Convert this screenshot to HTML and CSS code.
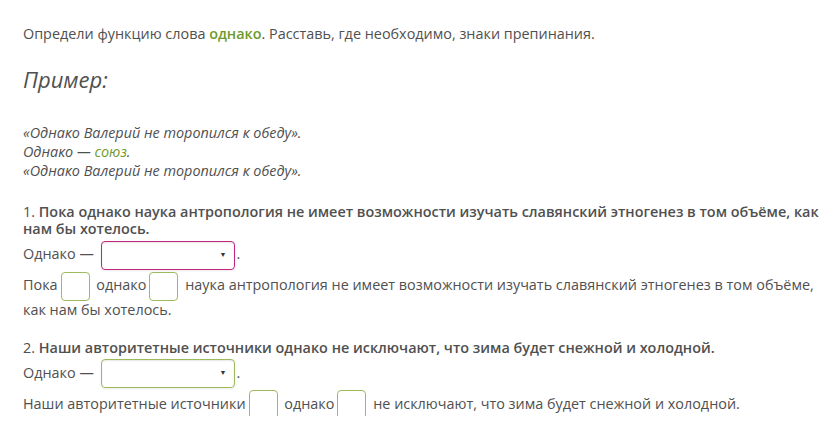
FILE: index.html
```html
<!DOCTYPE html>
<html lang="ru">

<head>
    <meta charset="UTF-8">
    <meta name="viewport" content="width=device-width, initial-scale=1.0">
    <title>Однако</title>
    <link rel="stylesheet" href="styles.css">
</head>

<body>
    <main class="task">
        <p class="intro">Определи функцию слова <b class="accent">однако</b>. Расставь, где необходимо, знаки препинания.</p>

        <h2 class="example-title">Пример:</h2>

        <div class="example">
            «Однако Валерий не торопился к обеду».<br>
            Однако — <span class="accent">союз</span>.<br>
            «Однако Валерий не торопился к обеду».
        </div>

        <section class="question">
            <p class="question-text">1. <b>Пока однако наука антропология не имеет возможности изучать славянский этногенез в том объёме, как нам бы хотелось.</b></p>
            <div class="answer-row">
                Однако —
                <span class="select select-active"><span class="arrow">▼</span></span>.
            </div>
            <p class="fill">
                Пока<span class="box"></span> однако<span class="box"></span> наука антропология не имеет возможности изучать славянский этногенез в том объёме, как нам бы хотелось.
            </p>
        </section>

        <section class="question">
            <p class="question-text">2. <b>Наши авторитетные источники однако не исключают, что зима будет снежной и холодной.</b></p>
            <div class="answer-row">
                Однако —
                <span class="select"><span class="arrow">▼</span></span>.
            </div>
            <p class="fill">
                Наши авторитетные источники<span class="box"></span> однако<span class="box"></span> не исключают, что зима будет снежной и холодной.
            </p>
        </section>
    </main>
</body>

</html>
```

FILE: styles.css
```css
body {
    margin: 0;
    background: #fff;
    font-family: "Open Sans", "Liberation Sans", sans-serif;
    font-size: 14.4px;
    color: #505050;
}

.task {
    width: 800px;
    padding: 24px 0 0 23px;
}

p {
    margin: 0;
}

.accent {
    color: #6f9a2b;
}

.intro {
    line-height: 20px;
}

.intro b {
    font-weight: 600;
}

.example-title {
    margin: 20px 0 0;
    font-size: 22px;
    font-weight: 400;
    font-style: italic;
    line-height: 30px;
}

.example {
    margin-top: 29px;
    font-style: italic;
    line-height: 19px;
}

.question {
    margin-top: 23px;
}

.question + .question {
    margin-top: 17px;
}

.question-text {
    line-height: 17px;
}

.question-text b {
    font-weight: 600;
}

.answer-row {
    margin-top: 1px;
    line-height: 31px;
    height: 31px;
}

.select {
    display: inline-block;
    position: relative;
    box-sizing: border-box;
    width: 134px;
    height: 29px;
    margin-left: 3px;
    margin-right: 2px;
    vertical-align: middle;
    border: 1px solid #9dba5c;
    border-radius: 4px;
    box-shadow: inset 0 1px 2px rgba(0, 0, 0, 0.1), 0 1px 2px rgba(0, 0, 0, 0.08);
}

.select-active {
    border-color: #c2247f;
}

.arrow {
    position: absolute;
    right: 7px;
    top: 0;
    font-size: 7px;
    line-height: 26px;
    color: #333;
}

.fill {
    margin-top: 4px;
    line-height: 24px;
}

.box {
    display: inline-block;
    box-sizing: border-box;
    width: 29px;
    height: 29px;
    margin: -3px 3px -3px 3px;
    vertical-align: middle;
    border: 1px solid #9dba5c;
    border-radius: 4px;
}
```
